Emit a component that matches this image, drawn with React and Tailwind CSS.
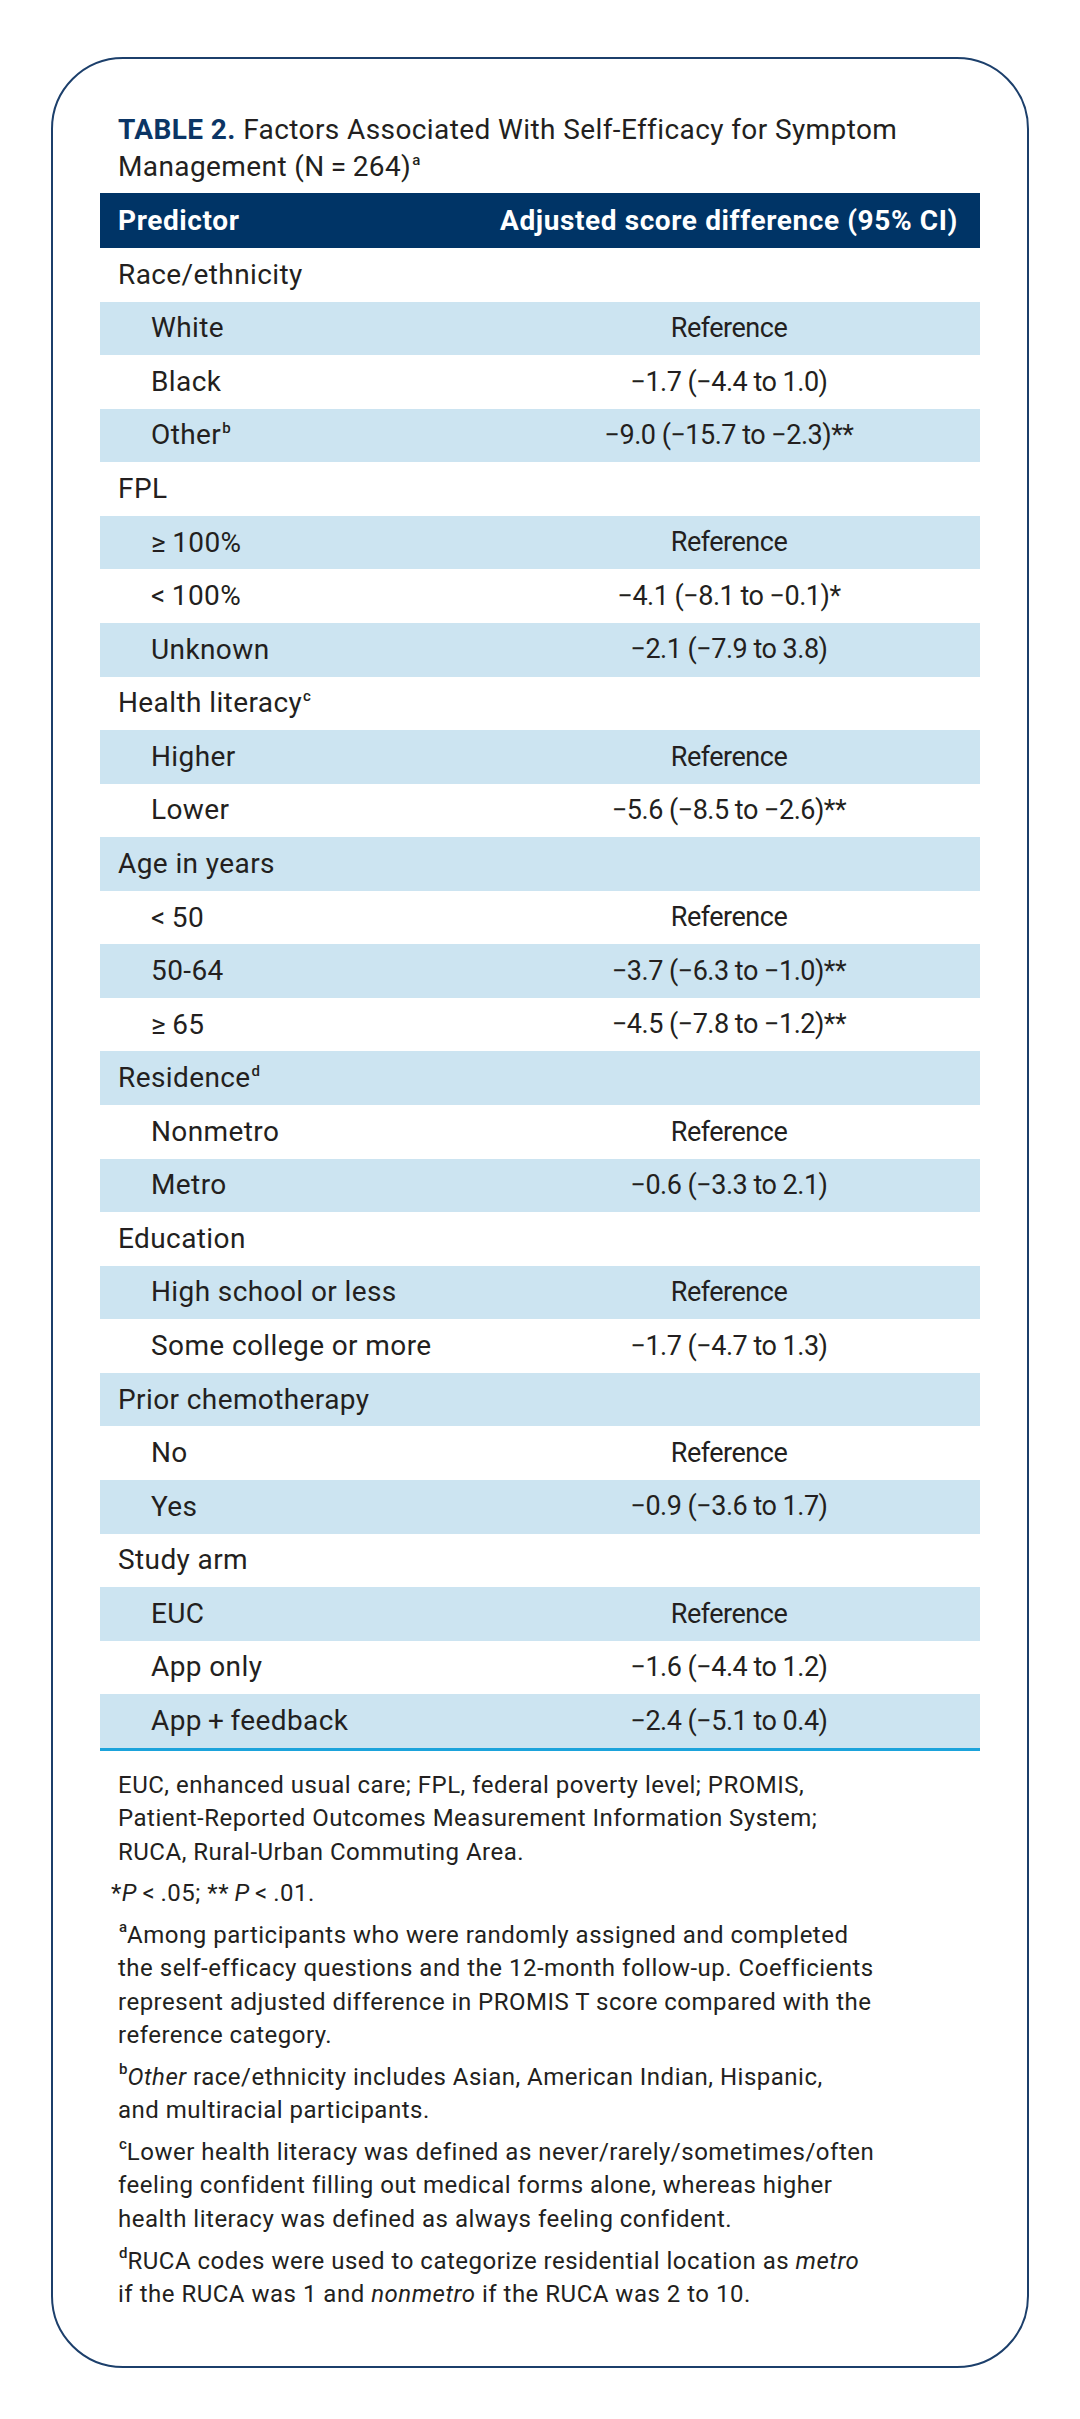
import React from "react";

const rows = [
  { label: "Race/ethnicity", cat: true },
  { label: "White", value: "Reference" },
  { label: "Black", value: "−1.7 (−4.4 to 1.0)" },
  { label: "Other", sup: "b", value: "−9.0 (−15.7 to −2.3)**" },
  { label: "FPL", cat: true },
  { label: "≥\u2009100%", value: "Reference" },
  { label: "<\u2009100%", value: "−4.1 (−8.1 to −0.1)*" },
  { label: "Unknown", value: "−2.1 (−7.9 to 3.8)" },
  { label: "Health literacy", sup: "c", cat: true },
  { label: "Higher", value: "Reference" },
  { label: "Lower", value: "−5.6 (−8.5 to −2.6)**" },
  { label: "Age in years", cat: true },
  { label: "<\u200950", value: "Reference" },
  { label: "50-64", value: "−3.7 (−6.3 to −1.0)**" },
  { label: "≥\u200965", value: "−4.5 (−7.8 to −1.2)**" },
  { label: "Residence", sup: "d", cat: true },
  { label: "Nonmetro", value: "Reference" },
  { label: "Metro", value: "−0.6 (−3.3 to 2.1)" },
  { label: "Education", cat: true },
  { label: "High school or less", value: "Reference" },
  { label: "Some college or more", value: "−1.7 (−4.7 to 1.3)" },
  { label: "Prior chemotherapy", cat: true },
  { label: "No", value: "Reference" },
  { label: "Yes", value: "−0.9 (−3.6 to 1.7)" },
  { label: "Study arm", cat: true },
  { label: "EUC", value: "Reference" },
  { label: "App only", value: "−1.6 (−4.4 to 1.2)" },
  { label: "App\u2009+\u2009feedback", value: "−2.4 (−5.1 to 0.4)" },
];

function Sup({ children }) {
  return (
    <span className="relative top-[-11px] ml-[1px] text-[15px] leading-none font-medium tracking-normal">
      {children}
    </span>
  );
}

export default function App() {
  return (
    <div className="w-[1080px] min-h-[2419px] bg-white pt-[57px] px-[51px] font-[Roboto,sans-serif] text-[#231f20]">
      <div className="border-2 border-[#1c3f6b] rounded-[72px] px-[47px] pt-[52px] pb-[55px]">
        <div className="pl-[18px] text-[28px] leading-[37px] tracking-[0.4px] whitespace-nowrap">
          <div>
            <span className="font-bold text-[#0b3565]">TABLE 2.</span> Factors Associated With Self-Efficacy for Symptom
          </div>
          <div>
            Management (N{"\u2009=\u2009"}264)<Sup>a</Sup>
          </div>
        </div>

        <div className="mt-[8px]">
          <div className="grid grid-cols-[378px_1fr] items-center h-[55px] bg-[#003466] text-white font-bold text-[28px] tracking-[0.6px] whitespace-nowrap">
            <div className="pl-[18px]">Predictor</div>
            <div className="text-center">Adjusted score difference (95% CI)</div>
          </div>
          <div className="border-b-[3px] border-[#1ba3db]">
            {rows.map((r, i) => (
              <div
                key={i}
                className={
                  "grid grid-cols-[378px_1fr] items-center h-[53.57px] whitespace-nowrap " +
                  (i % 2 === 1 ? "bg-[#cce4f1]" : "bg-white")
                }
              >
                <div className={"text-[28px] tracking-[0.4px] " + (r.cat ? "pl-[18px]" : "pl-[51px]")}>
                  {r.label}
                  {r.sup && <Sup>{r.sup}</Sup>}
                </div>
                <div className="text-center text-[27px] tracking-[-0.5px]">{r.value || ""}</div>
              </div>
            ))}
          </div>
        </div>

        <div className="mt-[18px] pl-[18px] text-[24px] leading-[33.4px] tracking-[0.5px] whitespace-nowrap flex flex-col gap-[8.3px]">
          <p>
            EUC, enhanced usual care; FPL, federal poverty level; PROMIS,
            <br />
            Patient-Reported Outcomes Measurement Information System;
            <br />
            RUCA, Rural-Urban Commuting Area.
          </p>
          <p className="-ml-[7px]">
            *<i>P</i>{"\u2009<\u2009"}.05; **{"\u2009"}<i>P</i>{"\u2009<\u2009"}.01.
          </p>
          <p>
            <Sup>a</Sup>Among participants who were randomly assigned and completed
            <br />
            the self-efficacy questions and the 12-month follow-up. Coefficients
            <br />
            represent adjusted difference in PROMIS T score compared with the
            <br />
            reference category.
          </p>
          <p>
            <Sup>b</Sup>
            <i>Other</i> race/ethnicity includes Asian, American Indian, Hispanic,
            <br />
            and multiracial participants.
          </p>
          <p>
            <Sup>c</Sup>Lower health literacy was defined as never/rarely/sometimes/often
            <br />
            feeling confident filling out medical forms alone, whereas higher
            <br />
            health literacy was defined as always feeling confident.
          </p>
          <p>
            <Sup>d</Sup>RUCA codes were used to categorize residential location as <i>metro</i>
            <br />
            if the RUCA was 1 and <i>nonmetro</i> if the RUCA was 2 to 10.
          </p>
        </div>
      </div>
    </div>
  );
}
